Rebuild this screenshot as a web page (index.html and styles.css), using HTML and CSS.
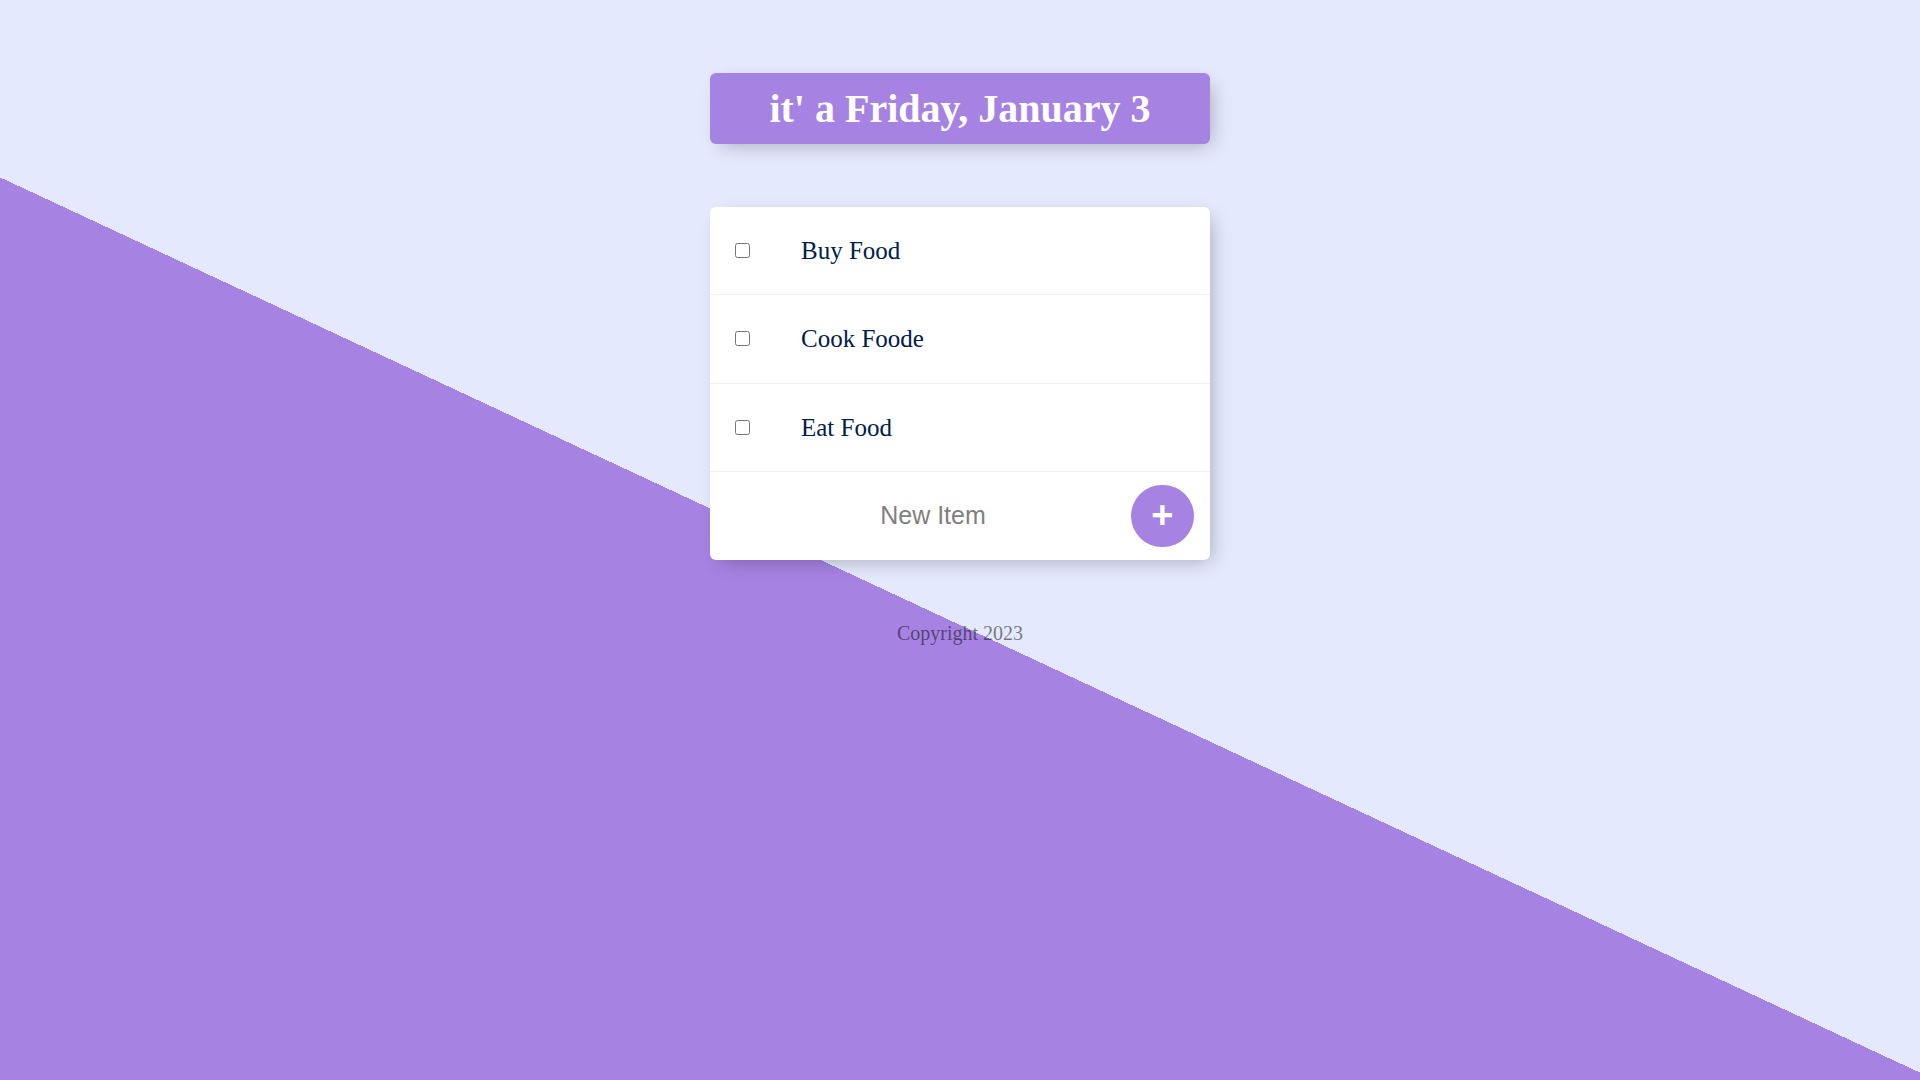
FILE: index.html
```html
<!DOCTYPE html>
<html lang="en">
<head>
<meta charset="utf-8">
<title>To Do List</title>
<link rel="stylesheet" href="styles.css">
</head>
<body>
<div class="page">
  <div class="box heading">
    <h1 class="title">it' a Friday, January 3</h1>
  </div>
  <div class="box list">
    <div class="item">
      <input class="check" type="checkbox">
      <p class="text">Buy Food</p>
    </div>
    <div class="item">
      <input class="check" type="checkbox">
      <p class="text">Cook Foode</p>
    </div>
    <div class="item">
      <input class="check" type="checkbox">
      <p class="text">Eat Food</p>
    </div>
    <form class="item new-row" onsubmit="return false">
      <input class="new-input" type="text" name="newItem" placeholder="New Item" autocomplete="off">
      <button class="add-btn" type="submit">+</button>
    </form>
  </div>
  <footer class="footer">Copyright 2023</footer>
</div>
</body>
</html>
```
FILE: styles.css
```css
html {
  background-color: #E4E9FD;
  background-image: linear-gradient(25deg, #A683E3 50%, #E4E9FD 50%);
  background-size: 100% 1250px;
  background-repeat: no-repeat;
  font-family: "Liberation Serif", "Times New Roman", serif;
}

body {
  margin: 0;
}

.page {
  padding-top: 73px;
  display: flex;
  flex-direction: column;
  align-items: center;
}

.box {
  width: 500px;
  background: #fff;
  border-radius: 6px;
  box-shadow: 6px 6px 19px -6px rgba(0, 0, 0, 0.3);
}

.heading {
  background-color: #A683E3;
  text-align: center;
}

.title {
  margin: 0;
  padding: 12.5px;
  font-size: 40px;
  font-weight: bold;
  line-height: 46px;
  color: #fff;
}

.list {
  margin-top: 62.5px;
}

.item {
  min-height: 87.5px;
  display: flex;
  align-items: center;
  border-bottom: 1.25px solid #F1F1F1;
}

.item:last-child {
  border-bottom: 0;
}

.check {
  appearance: none;
  -webkit-appearance: none;
  width: 15px;
  height: 15px;
  margin: 0 26px 0 25px;
  border: 1.25px solid #767676;
  border-radius: 2.5px;
  background: #fff;
  flex: none;
}

.text {
  margin: 0;
  padding: 25px;
  font-size: 25px;
  color: #00204a;
  line-height: 29px;
}

.new-row {
  margin: 0 0 0 25px;
}

.new-input {
  text-align: center;
  height: 75px;
  border: none;
  background: transparent;
  font-family: "Liberation Sans", Arial, sans-serif;
  font-size: 25px;
  width: 391px;
  padding: 1px 2.5px;
  box-sizing: content-box;
  outline: none;
  color: #000;
}

.new-input::placeholder {
  color: grey;
  opacity: 1;
}

.add-btn {
  width: 62.5px;
  height: 62.5px;
  border-radius: 50%;
  border: 0;
  background-color: #A683E3;
  color: #fff;
  font-family: "Liberation Sans", Arial, sans-serif;
  font-size: 38px;
  font-weight: bold;
  line-height: 1;
  padding: 0 0 2px 0;
  display: flex;
  align-items: center;
  justify-content: center;
  flex: none;
}

.footer {
  margin-top: 62.5px;
  font-size: 20px;
  line-height: 23px;
  color: rgba(0, 0, 0, 0.5);
  text-align: center;
}
```
